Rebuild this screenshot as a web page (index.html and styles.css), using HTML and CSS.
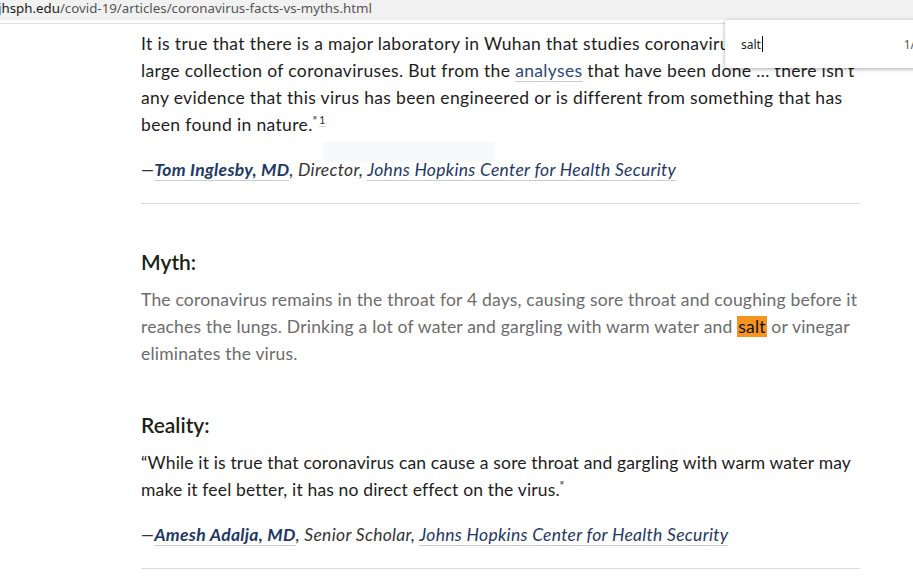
FILE: index.html
```html
<!DOCTYPE html>
<html>
<head>
<meta charset="utf-8">
<link rel="stylesheet" href="styles.css">
</head>
<body>
<div class="urlbar"><span class="host">jhsph.edu</span>/covid-19/articles/coronavirus-facts-vs-myths.html</div>
<div class="urlline"></div>
<main class="article">
  <p class="quote first">It is true that there is a major laboratory in Wuhan that studies coronaviruses and has a large collection of coronaviruses. But from the <a class="link" href="#">analyses</a> that have been done ... there isn’t any evidence that this virus has been engineered or is different from something that has been found in nature.<span class="cq">”</span><sup class="fn"><a class="fnlink" href="#">1</a></sup></p>
  <div class="ghost"></div>
  <p class="attr">—<a class="name" href="#">Tom Inglesby, MD</a>, Director, <a class="org" href="#">Johns Hopkins Center for Health Security</a></p>
  <hr class="rule">
  <h3 class="label">Myth:</h3>
  <p class="myth">The coronavirus remains in the throat for 4 days, causing sore throat and coughing before it reaches the lungs. Drinking a lot of water and gargling with warm water and <mark class="hit">salt</mark> or vinegar eliminates the virus.</p>
  <h3 class="label reality">Reality:</h3>
  <p class="quote">“While it is true that coronavirus can cause a sore throat and gargling with warm water may make it feel better, it has no direct effect on the virus.<span class="cq">”</span></p>
  <p class="attr">—<a class="name" href="#">Amesh Adalja, MD</a>, Senior Scholar, <a class="org" href="#">Johns Hopkins Center for Health Security</a></p>
  <hr class="rule">
</main>
<div class="findbar">
  <span class="findtext">salt</span><span class="caret"></span>
  <span class="count">1/</span>
</div>
</body>
</html>
```
FILE: styles.css
```css
html, body {
  margin: 0;
  padding: 0;
  background: #fff;
  overflow: hidden;
}
body {
  width: 913px;
  height: 581px;
  position: relative;
  font-family: Lato, "Liberation Sans", sans-serif;
}
.urlbar {
  height: 20px;
  background: #f1f1f1;
  font-family: "Noto Sans", "Open Sans", sans-serif;
  font-size: 13.3px;
  line-height: 17px;
  color: #555;
  margin-left: -2px;
  white-space: nowrap;
}
.urlline {
  height: 1px;
  margin-top: 3px;
  background: #e0e0e0;
}
.host { color: #1a1a1a; }
.article {
  width: 720px;
  margin-left: 141px;
  padding-top: 6px;
  position: relative;
}
.quote, .myth, .attr {
  margin: 0;
  font-size: 17.5px;
  letter-spacing: 0.15px;
  line-height: 27px;
}
.quote { color: #1d1d1d; }
.quote.first { letter-spacing: 0.35px; }
.myth { color: #6c6c6c; margin-bottom: 43px; letter-spacing: 0.2px; }
.cq { font-size: 11px; position: relative; top: -6px; }
.fn { font-size: 11px; vertical-align: baseline; position: relative; top: -7px; line-height: 0; margin-left: 2px; }
.fnlink { color: #1d2f58; text-decoration: none; border-bottom: 1px solid #d4d8de; }
.link {
  color: #2b4a78;
  text-decoration: none;
  border-bottom: 1px solid #c7ccd6;
}
.ghost {
  position: absolute;
  left: 182px;
  top: 118px;
  height: 20px;
  width: 172px;
  background: #f7fafd;
}
.attr {
  font-style: italic;
  color: #333;
  margin-top: 16px;
  margin-bottom: 20px;
  letter-spacing: 0.3px;
  position: relative;
}
.name {
  font-weight: 700;
  color: #1e3866;
  text-decoration: none;
  border-bottom: 1px solid #c8ccd4;
}
.org {
  color: #1e3866;
  text-decoration: none;
  border-bottom: 1px solid #c8ccd4;
}
.rule {
  border: 0;
  border-top: 1px solid #dcdcdc;
  margin: 0;
  width: 719px;
}
.label {
  margin: 43px 0 9px;
  font-size: 21px;
  line-height: 30px;
  font-weight: 600;
  color: #1b1f14;
}
.label.reality { margin-top: 0; margin-bottom: 9px; }
.myth { margin-top: 0; }
.hit {
  background: #f5951f;
  color: #111;
  padding: 0 1px;
}
.findbar {
  position: absolute;
  left: 725px;
  top: 20px;
  width: 200px;
  height: 48px;
  background: #fff;
  box-shadow: 0 1px 4px rgba(0,0,0,0.35);
  border-radius: 2px;
  font-family: "Noto Sans", "Open Sans", sans-serif;
  font-size: 12px;
  display: flex;
  align-items: center;
}
.findtext { margin-left: 16px; color: #222; }
.caret { width: 1px; height: 16px; background: #111; margin-left: 1px; }
.count { margin-left: auto; margin-right: 10px; color: #555; font-size: 12px; }
```
